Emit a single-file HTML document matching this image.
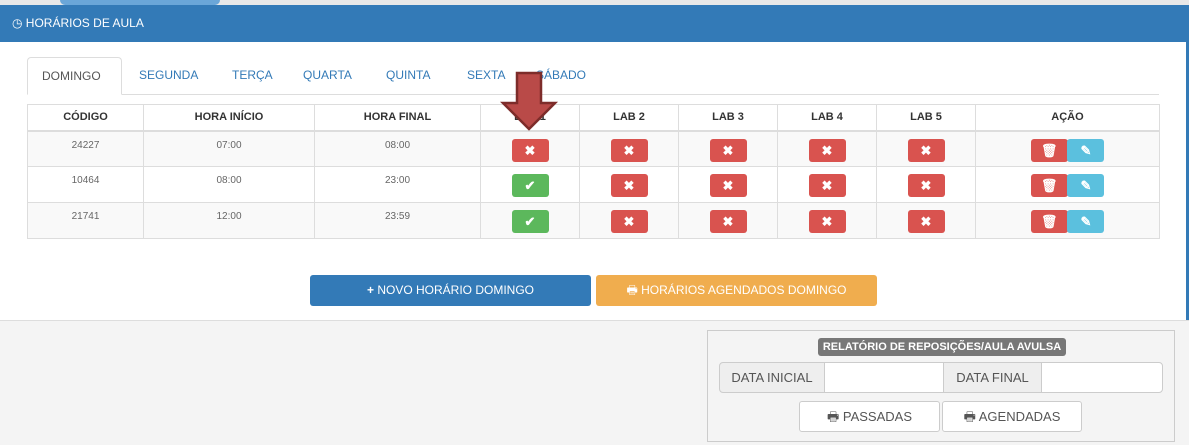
<!DOCTYPE html><html><head><meta charset="utf-8"><style>
*{box-sizing:border-box;margin:0;padding:0}
body{width:1189px;height:445px;overflow:hidden;background:#fff;font-family:"Liberation Sans",sans-serif;position:relative}
.abs{position:absolute}
.hdr{left:0;top:5px;width:1189px;height:37px;background:#337ab7;color:#fff;font-size:12px;line-height:37px;padding-left:12px}
.tabs{left:27px;top:57px;width:1132px;height:38px;border-bottom:1px solid #ddd;font-size:12px;color:#337ab7}
.tab{position:absolute;top:0;height:38px;line-height:36px}
.act{border:1px solid #ddd;border-bottom:1px solid #fff;border-radius:4px 4px 0 0;background:#fff;color:#555;padding:0 14px;left:0;width:95px}
table{position:absolute;left:27px;top:104px;border-collapse:collapse;font-size:10px;color:#666}
td,th{border:1px solid #ddd;text-align:center;padding:0}
th{height:26px;font-size:11px;color:#333;border-bottom:2px solid #ddd}
tr.r td{height:36px;vertical-align:top;padding-top:8px;background:#f9f9f9}
tr.w td{background:#fff}
.b{display:inline-block;width:37px;height:23px;border-radius:3px;color:#fff;font-size:13px;line-height:23px;font-weight:bold}
.rd{background:#d9534f}.gr{background:#5cb85c}.bl{background:#5bc0de}
tr.r td.btn{padding-top:7px}
.btm{left:0;top:320px;width:1189px;height:125px;background:#f4f4f4;border-top:1px solid #ddd}
.box{left:707px;top:330px;width:468px;height:112px;border:1px solid #ccc}
.inp{position:absolute;height:31px;border:1px solid #ccc;font-size:13px;color:#555;line-height:29px;text-align:center}
</style></head><body>
<div class="abs" style="left:0;top:0;width:1189px;height:5px;background:#e8e8e8"></div>
<div class="abs" style="left:60px;top:0;width:160px;height:5px;background:#6aa6d8;border-radius:0 0 6px 6px"></div>
<div class="abs hdr">&#x25F7; HORÁRIOS DE AULA</div>
<div class="abs" style="left:1186px;top:42px;width:3px;height:280px;background:#337ab7"></div>
<div class="abs tabs">
<div class="tab act">DOMINGO</div>
<div class="tab" style="left:112px">SEGUNDA</div>
<div class="tab" style="left:205px">TERÇA</div>
<div class="tab" style="left:276px">QUARTA</div>
<div class="tab" style="left:359px">QUINTA</div>
<div class="tab" style="left:440px">SEXTA</div>
<div class="tab" style="left:509px">SÁBADO</div>
</div>
<table>
<tr><th style="width:116px">CÓDIGO</th><th style="width:171px">HORA INÍCIO</th><th style="width:166px">HORA FINAL</th><th style="width:99px">LAB 1</th><th style="width:99px">LAB 2</th><th style="width:99px">LAB 3</th><th style="width:99px">LAB 4</th><th style="width:99px">LAB 5</th><th style="width:184px">AÇÃO</th></tr>
<tr class="r"><td>24227</td><td>07:00</td><td>08:00</td><td class="btn"><span class="b rd">✖</span></td><td class="btn"><span class="b rd">✖</span></td><td class="btn"><span class="b rd">✖</span></td><td class="btn"><span class="b rd">✖</span></td><td class="btn"><span class="b rd">✖</span></td><td class="btn"><span class="b rd">🗑</span> <span class="b bl" style="margin-left:-3px">✎</span></td></tr>
<tr class="r w"><td>10464</td><td>08:00</td><td>23:00</td><td class="btn"><span class="b gr">✔</span></td><td class="btn"><span class="b rd">✖</span></td><td class="btn"><span class="b rd">✖</span></td><td class="btn"><span class="b rd">✖</span></td><td class="btn"><span class="b rd">✖</span></td><td class="btn"><span class="b rd">🗑</span> <span class="b bl" style="margin-left:-3px">✎</span></td></tr>
<tr class="r"><td>21741</td><td>12:00</td><td>23:59</td><td class="btn"><span class="b gr">✔</span></td><td class="btn"><span class="b rd">✖</span></td><td class="btn"><span class="b rd">✖</span></td><td class="btn"><span class="b rd">✖</span></td><td class="btn"><span class="b rd">✖</span></td><td class="btn"><span class="b rd">🗑</span> <span class="b bl" style="margin-left:-3px">✎</span></td></tr>
</table>
<svg class="abs" style="left:500px;top:70px" width="60" height="62"><path d="M17 3H41V33H55L29 59L3 33H17Z" fill="#b94a48" stroke="#7d2c2a" stroke-width="2.5"/></svg>
<div class="abs" style="left:310px;top:275px;width:281px;height:31px;background:#337ab7;border-radius:3px;color:#fff;font-size:12px;line-height:31px;text-align:center"><b>+</b> NOVO HORÁRIO DOMINGO</div>
<div class="abs" style="left:596px;top:275px;width:281px;height:31px;background:#f0ad4e;border-radius:3px;color:#fff;font-size:12px;line-height:31px;text-align:center">🖶 HORÁRIOS AGENDADOS DOMINGO</div>
<div class="abs btm"></div>
<div class="abs box">
<div class="abs" style="left:110px;top:7px;width:248px;height:18px;background:#777;border-radius:3px;color:#fff;font-size:11px;font-weight:bold;line-height:18px;text-align:center">RELATÓRIO DE REPOSIÇÕES/AULA AVULSA</div>
<div class="inp" style="left:11px;top:31px;width:106px;background:#eee;border-radius:4px 0 0 4px">DATA INICIAL</div>
<div class="inp" style="left:116px;top:31px;width:120px;background:#fff"></div>
<div class="inp" style="left:235px;top:31px;width:99px;background:#eee">DATA FINAL</div>
<div class="inp" style="left:333px;top:31px;width:122px;background:#fff;border-radius:0 4px 4px 0"></div>
<div class="inp" style="left:91px;top:70px;width:141px;background:#fff;border-radius:3px">🖶 PASSADAS</div>
<div class="inp" style="left:234px;top:70px;width:140px;background:#fff;border-radius:3px">🖶 AGENDADAS</div>
</div>
</body></html>
